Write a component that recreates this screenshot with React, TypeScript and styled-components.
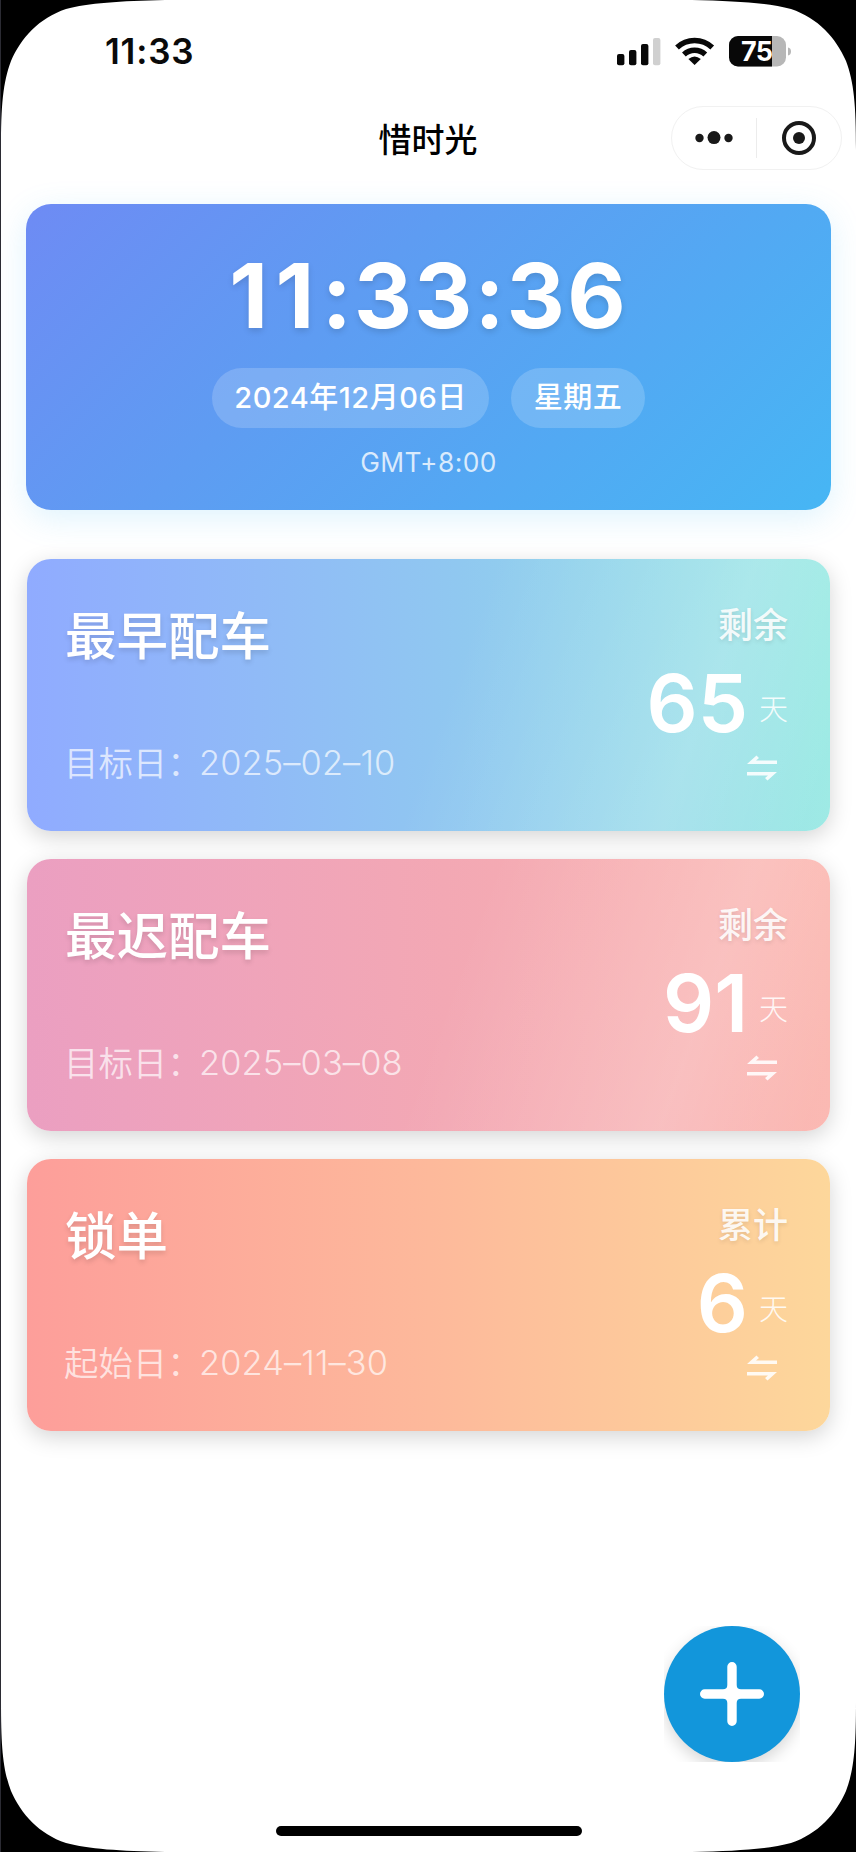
import React from "react";
import styled, { createGlobalStyle } from "styled-components";

const GlobalStyle = createGlobalStyle`
  * { box-sizing: border-box; }
  body {
    margin: 0;
    background: #fff;
    font-family: Inter, "Noto Sans CJK SC", sans-serif;
    -webkit-font-smoothing: antialiased;
  }
`;

const Screen = styled.main`
  position: relative;
  display: flex;
  flex-direction: column;
  width: 856px;
  height: 1852px;
  overflow: hidden;
  background: #fff;
  border-left: 1px solid #2b2b33;
`;

const StatusBar = styled.header`
  display: flex;
  justify-content: space-between;
  align-items: center;
  height: 100px;
  padding: 2px 64px 0 104px;
`;

const StatusTime = styled.div`
  font-size: 35px;
  font-weight: 600;
  line-height: 40px;
  letter-spacing: 0.8px;
  color: #0a0a0a;
`;

const StatusIcons = styled.svg`
  display: block;
  width: 176px;
  height: 32px;
`;

const BatteryText = styled.text`
  font: 700 27px Inter, sans-serif;
  letter-spacing: -0.8px;
`;

const NavBar = styled.nav`
  display: grid;
  grid-template-columns: 1fr auto 1fr;
  align-items: center;
  height: 76px;
  padding-right: 14px;
  padding-left: 13px;
`;

const NavTitle = styled.h1`
  grid-column: 2;
  margin: 0;
  padding-top: 3px;
  font-size: 33px;
  font-weight: 500;
  line-height: 40px;
  color: #000;
`;

const Capsule = styled.div`
  justify-self: end;
  display: flex;
  align-items: center;
  width: 171px;
  height: 64px;
  border: 1px solid #f1f1f1;
  border-radius: 32px;
  background: #fff;
`;

const CapsuleButton = styled.button`
  display: flex;
  flex: 1;
  align-items: center;
  justify-content: center;
  height: 40px;
  padding: 0;
  border: 0;
  background: none;

  & + & { border-left: 1px solid #ececec; }
`;

const Content = styled.section`
  display: flex;
  flex-direction: column;
  padding: 28px 25px 0;
`;

const ClockCard = styled.section`
  display: flex;
  flex-direction: column;
  align-items: center;
  height: 306px;
  padding-top: 47px;
  border-radius: 25px;
  background: linear-gradient(135deg, #6e8bf4 0%, #5e9cf2 38%, #46b6f4 100%);
  box-shadow: 0 8px 32px rgba(70, 190, 245, 0.18);
  color: #fff;
`;

const Clock = styled.div`
  font-size: 90px;
  font-weight: 700;
  line-height: 90px;
  letter-spacing: 2.2px;
  text-shadow: 0 3px 6px rgba(0, 0, 0, 0.13);
`;

const Hours = styled.span`
  letter-spacing: 7.5px;
`;

const PillRow = styled.div`
  display: flex;
  gap: 22px;
  margin-top: 27px;
`;

const Pill = styled.div<{ $width: number }>`
  width: ${({ $width }) => $width}px;
  border-radius: 30px;
  background: rgba(255, 255, 255, 0.18);
  font-size: 29px;
  font-weight: 500;
  line-height: 60px;
  letter-spacing: 0.5px;
  text-align: center;
  white-space: nowrap;
`;

const Zone = styled.div`
  margin-top: 18px;
  font-size: 26.4px;
  line-height: 32px;
  letter-spacing: 0.4px;
  color: rgba(255, 255, 255, 0.78);
`;

const CardList = styled.div`
  display: flex;
  flex-direction: column;
  gap: 28px;
  margin-top: 49px;
  padding: 0 1px;
`;

const DayCard = styled.article<{ $background: string }>`
  display: flex;
  justify-content: space-between;
  height: 272px;
  padding: 46px 42px 0 38px;
  border-radius: 24px;
  background: ${({ $background }) => $background};
  box-shadow: 0 6px 22px rgba(0, 0, 0, 0.17);
  color: #fff;
`;

const Info = styled.div`
  display: flex;
  flex-direction: column;
`;

const Name = styled.h2`
  margin: 0;
  padding-top: 1px;
  font-size: 51.5px;
  font-weight: 500;
  line-height: 60px;
  text-shadow: 0 3px 5px rgba(0, 0, 0, 0.13);
`;

const DateLine = styled.div`
  display: flex;
  margin-top: 77px;
  font-size: 34.4px;
  font-weight: 350;
  line-height: 40px;
  white-space: nowrap;
  color: rgba(255, 255, 255, 0.7);
`;

const DateLabel = styled.span`
  width: 135px;
  padding-top: 1px;
  margin-left: -1px;
`;

const DateValue = styled.span`
  letter-spacing: 0.1px;
`;

const Remaining = styled.div`
  display: flex;
  flex-direction: column;
  align-items: flex-end;
`;

const Label = styled.div`
  font-size: 35px;
  font-weight: 500;
  line-height: 40px;
  color: rgba(255, 255, 255, 0.9);
  text-shadow: 0 2px 4px rgba(0, 0, 0, 0.1);
`;

const Count = styled.div`
  display: flex;
  align-items: center;
  gap: 11px;
  height: 80px;
  margin-top: 18px;
`;

const Digits = styled.span`
  font-size: 80px;
  font-weight: 600;
  line-height: 80px;
`;

const Unit = styled.span`
  padding-top: 14px;
  font-size: 29px;
  font-weight: 300;
  line-height: 30px;
  color: rgba(255, 255, 255, 0.88);
`;

const SwapIcon = styled.svg`
  width: 32px;
  height: 26px;
  margin: 12px 10px 0 0;
`;

const AddButton = styled.button`
  position: absolute;
  top: 1626px;
  right: 56px;
  width: 136px;
  height: 136px;
  padding: 0;
  overflow: hidden;
  border: 0;
  background: none;
`;

const AddFace = styled.span`
  display: flex;
  align-items: center;
  justify-content: center;
  width: 136px;
  height: 136px;
  border-radius: 50%;
  background: #1296db;
  box-shadow: 0 6px 16px rgba(0, 0, 0, 0.16);
`;

const HomeIndicator = styled.div`
  position: absolute;
  bottom: 16px;
  left: 275px;
  width: 306px;
  height: 10px;
  border-radius: 5px;
  background: #000;
`;

const Bezel = styled.svg`
  position: absolute;
  top: 0;
  left: -1px;
  width: 856px;
  height: 1852px;
  pointer-events: none;
`;

const SHEEN =
  "linear-gradient(110deg, rgba(255,255,255,0) 52%, rgba(255,255,255,0.2) 81%, rgba(255,255,255,0.06) 97%)";

const CARDS = [
  {
    name: "最早配车",
    dateLabel: "目标日：",
    date: "2025–02–10",
    label: "剩余",
    days: 65,
    background: `${SHEEN}, linear-gradient(90deg, #90abff 0%, #90c8f0 54%, #98e9e3 100%)`,
  },
  {
    name: "最迟配车",
    dateLabel: "目标日：",
    date: "2025–03–08",
    label: "剩余",
    days: 91,
    background: `${SHEEN}, linear-gradient(90deg, #eb9fc1 0%, #f3a8b4 52%, #fbb5ae 100%)`,
  },
  {
    name: "锁单",
    dateLabel: "起始日：",
    date: "2024–11–30",
    label: "累计",
    days: 6,
    background: "linear-gradient(90deg, #fd9e9a 0%, #fdba9b 52%, #fdd79b 100%)",
  },
];

const CORNER = "M0 0H165C120 1 88 3 66 9C39 18 21 38 11 61C3 82 1 105 1 150H0Z";

export default function App() {
  return (
    <>
      <GlobalStyle />
      <Screen>
        <StatusBar>
          <StatusTime>11:33</StatusTime>
          <StatusIcons viewBox="616 34 176 32">
            <g fill="#080808">
              <rect x="617" y="53" width="7.4" height="11.2" rx="2" />
              <rect x="629" y="49" width="7.4" height="15.2" rx="2" />
              <rect x="641" y="43" width="7.4" height="21.2" rx="2" />
            </g>
            <rect x="653" y="37" width="7.4" height="27.2" rx="2" fill="#d0d0d0" />
            <g fill="none" stroke="#080808" strokeWidth="5.4">
              <path d="M677 46.5A25.5 25.5 0 0 1 712.2 46.5" />
              <path d="M683.9 53.5A15.4 15.4 0 0 1 705.3 53.5" />
            </g>
            <path d="M694.6 64L688.4 58Q694.6 53 700.8 58Z" fill="#080808" />
            <rect x="729" y="35" width="57" height="30.5" rx="9" fill="#b7b7b7" />
            <path d="M738 35H772V65.5H738A9 9 0 0 1 729 56.500V44A9 9 0 0 1 738 35Z" fill="#080808" />
            <path d="M788 46.500Q791 47 791 50.500Q791 54 788 54.500Z" fill="#b7b7b7" />
            <BatteryText x="756.6" y="60" textAnchor="middle" fill="#fff">75</BatteryText>
          </StatusIcons>
        </StatusBar>

        <NavBar>
          <NavTitle>惜时光</NavTitle>
          <Capsule>
            <CapsuleButton aria-label="更多">
              <svg width="40" height="14" viewBox="0 0 40 14" fill="#191919">
                <circle cx="5.500" cy="7" r="4.200" />
                <circle cx="20" cy="6.600" r="6.500" />
                <circle cx="34.500" cy="7" r="4.200" />
              </svg>
            </CapsuleButton>
            <CapsuleButton aria-label="关闭">
              <svg width="36" height="36" viewBox="0 0 36 36">
                <circle cx="18" cy="18" r="15" fill="none" stroke="#191919" strokeWidth="4" />
                <circle cx="18" cy="18" r="6" fill="#191919" />
              </svg>
            </CapsuleButton>
          </Capsule>
        </NavBar>

        <Content>
          <ClockCard>
            <Clock>
              <Hours>11</Hours>:33:36
            </Clock>
            <PillRow>
              <Pill $width={277}>2024年12月06日</Pill>
              <Pill $width={134}>星期五</Pill>
            </PillRow>
            <Zone>GMT+8:00</Zone>
          </ClockCard>

          <CardList>
            {CARDS.map((card) => (
              <DayCard key={card.name} $background={card.background}>
                <Info>
                  <Name>{card.name}</Name>
                  <DateLine>
                    <DateLabel>{card.dateLabel}</DateLabel>
                    <DateValue>{card.date}</DateValue>
                  </DateLine>
                </Info>
                <Remaining>
                  <Label>{card.label}</Label>
                  <Count>
                    <Digits>{card.days}</Digits>
                    <Unit>天</Unit>
                  </Count>
                  <SwapIcon viewBox="0 0 32 26" fill="#fff" fillOpacity="0.88">
                    <path d="M1 9L10.500 0.500L13 3L10 5.500H31V9Z" />
                    <path d="M31 17L21.500 25.500L19 23L22 20.500H1V17Z" />
                  </SwapIcon>
                </Remaining>
              </DayCard>
            ))}
          </CardList>
        </Content>

        <AddButton aria-label="添加">
          <AddFace>
            <svg width="64" height="64" viewBox="0 0 64 64" fill="#fff">
              <path d="M27.300 4.700a4.700 4.700 0 0 1 9.400 0V23q0 4.300 4.300 4.300H59.300a4.700 4.700 0 0 1 0 9.400H41q-4.300 0-4.300 4.300V59.300a4.700 4.700 0 0 1-9.400 0V41q0-4.300-4.300-4.300H4.700a4.700 4.700 0 0 1 0-9.400H23q4.300 0 4.300-4.300Z" />
            </svg>
          </AddFace>
        </AddButton>
        <HomeIndicator />
        <Bezel viewBox="0 0 856 1852">
          <path d={CORNER} />
          <path d={CORNER} transform="translate(857 0) scale(-1 1)" />
          <path d={CORNER} transform="translate(0 1852) scale(1 -1)" />
          <path d={CORNER} transform="translate(857 1852) scale(-1 -1)" />
        </Bezel>
      </Screen>
    </>
  );
}
